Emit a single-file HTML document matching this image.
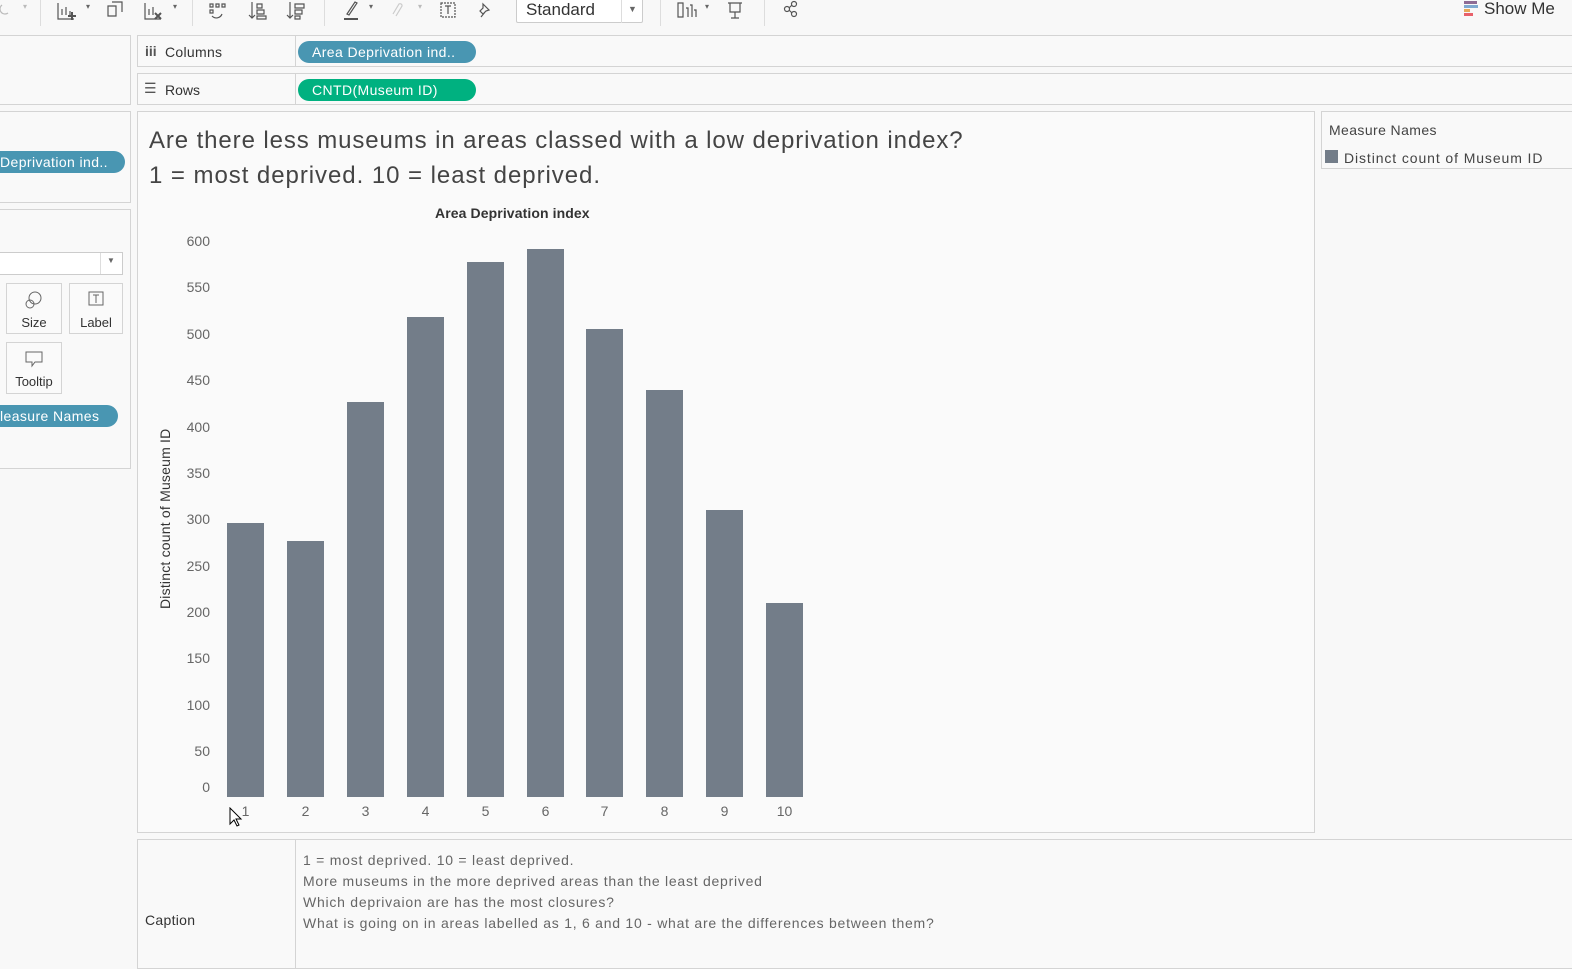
<!DOCTYPE html>
<html><head><meta charset="utf-8"><style>
*{margin:0;padding:0;box-sizing:border-box}
body{width:1572px;height:959px;background:#f8f8f8;font-family:"Liberation Sans",sans-serif;position:relative;overflow:hidden;color:#333}
.a{position:absolute}
.box{position:absolute;border:1px solid #d4d4d4;background:#f9f9f9}
.pill{position:absolute;border-radius:11px;color:#fff;font-size:14px;line-height:22px;padding-left:14px;white-space:nowrap;overflow:hidden;letter-spacing:0.4px}
.t{position:absolute;white-space:nowrap}
.bar{position:absolute;background:#737d89;width:37px}
.yl{position:absolute;left:170px;width:40px;text-align:right;font-size:14px;color:#666}
.xl{position:absolute;top:803px;width:37px;text-align:center;font-size:14px;color:#666}
.ic{position:absolute;color:#666;font-size:14px}
.card{position:absolute;border:1px solid #d4d4d4;background:#fafafa;text-align:center;font-size:13px;color:#333}
</style></head><body>
<div class="a" style="left:0;top:0;width:1572px;height:33px;background:#f8f8f8"></div>
<div class="a" style="left:40px;top:0;width:1px;height:26px;background:#ddd"></div>
<div class="a" style="left:192px;top:0;width:1px;height:26px;background:#ddd"></div>
<div class="a" style="left:324px;top:0;width:1px;height:26px;background:#ddd"></div>
<div class="a" style="left:660px;top:0;width:1px;height:26px;background:#ddd"></div>
<div class="a" style="left:764px;top:0;width:1px;height:26px;background:#ddd"></div>
<svg class="a" style="left:0;top:0" width="800" height="26" fill="none" stroke="#555" stroke-width="1.2">
<path d="M2 5 a5 5 0 1 0 6 8" stroke="#bbb"/>
<path d="M58 3v16h16M62 15v-6M66 15v-8M70 15v-4"/><path d="M72 12v8M68 16h8" stroke-width="2"/>
<path d="M108 6h8v10h-8zM112 2h10v10"/>
<path d="M145 3v16h16M149 15v-6M153 15v-8"/><path d="M155 13l6 6M161 13l-6 6" stroke-width="2"/>
<path d="M210 4h3v3h-3zM216 4h3v3h-3zM222 4h3v3h-3zM210 10h3v3h-3zM212 16a6 6 0 0 0 10-2"/>
<path d="M252 2v16M249 15l3 3 3-3M257 4h5v4h-5zM257 10h7v4h-7zM257 16h9v3h-9z"/>
<path d="M290 2v16M287 15l3 3 3-3M295 4h9v4h-9zM295 10h7v4h-7zM295 16h5v3h-5z"/>
<path d="M347 14l8-12 2 1-8 12z"/><path d="M344 19h14" stroke-width="2"/>
<path d="M393 14l6-10a2 2 0 0 1 3 2l-6 10" stroke="#ccc"/>
<path d="M441 3h14v14h-14z" stroke-dasharray="2 1"/><path d="M445 6h6M448 6v8"/>
<path d="M481 17l4-5M483 4l6 6-3 1-3 3-3-3 3-3z"/>
<path d="M678 3h5v14h-5zM686 8h2v9M690 5h2v12M694 10h2v7"/>
<path d="M728 3h14M730 3v9h10V3M735 12v6M731 18h8"/>
<circle cx="794" cy="4" r="2.5"/><circle cx="787" cy="9" r="2.5"/><circle cx="794" cy="14" r="2.5"/><path d="M789 8l3-3M789 10l3 3"/>
</svg>
<div class="ic" style="left:86px;top:2px;font-size:8px">▾</div>
<div class="ic" style="left:173px;top:2px;font-size:8px">▾</div>
<div class="ic" style="left:369px;top:2px;font-size:8px">▾</div>
<div class="ic" style="left:418px;top:2px;font-size:8px;color:#bbb">▾</div>
<div class="ic" style="left:705px;top:2px;font-size:8px">▾</div>
<div class="ic" style="left:23px;top:2px;font-size:8px;color:#bbb">▾</div>
<div class="a" style="left:516px;top:-2px;width:127px;height:25px;border:1px solid #ccc;background:#fff;border-radius:2px"></div>
<div class="a" style="left:621px;top:-2px;width:1px;height:25px;background:#ddd"></div>
<div class="t" style="left:526px;top:0;font-size:17px;color:#333">Standard</div>
<div class="ic" style="left:628px;top:4px;font-size:9px">▼</div>
<div class="a" style="left:1464px;top:1px;width:13px;height:3px;background:#8e6b94"></div>
<div class="a" style="left:1464px;top:5px;width:14px;height:3px;background:#7fa9d0"></div>
<div class="a" style="left:1464px;top:9px;width:6px;height:3px;background:#e7a857"></div>
<div class="a" style="left:1464px;top:13px;width:9px;height:3px;background:#e8606a"></div>
<div class="t" style="left:1484px;top:-1px;font-size:17px;color:#333">Show Me</div>
<div class="box" style="left:-2px;top:35px;width:133px;height:70px"></div>
<div class="box" style="left:-2px;top:111px;width:133px;height:92px"></div>
<div class="pill" style="left:-14px;top:151px;width:139px;background:#4996b2">Deprivation ind..</div>
<div class="box" style="left:-2px;top:209px;width:133px;height:260px"></div>
<div class="a" style="left:-2px;top:252px;width:125px;height:23px;border:1px solid #ccc;background:#fff"></div>
<div class="a" style="left:100px;top:253px;width:1px;height:21px;background:#ddd"></div>
<div class="ic" style="left:107px;top:256px;font-size:8px">▼</div>
<div class="card" style="left:6px;top:283px;width:56px;height:51px"><svg width="22" height="22" style="margin-top:5px" fill="none" stroke="#666"><circle cx="12" cy="9" r="6"/><circle cx="7" cy="15" r="4"/></svg><div style="margin-top:1px">Size</div></div>
<div class="card" style="left:69px;top:283px;width:54px;height:51px"><svg width="22" height="22" style="margin-top:5px" fill="none" stroke="#666"><rect x="4" y="3" width="14" height="13"/><path d="M8 6h6M11 6v8"/></svg><div style="margin-top:1px">Label</div></div>
<div class="card" style="left:6px;top:342px;width:56px;height:52px"><svg width="22" height="22" style="margin-top:5px" fill="none" stroke="#666"><path d="M3 4h16v10h-7l-3 4v-4h-6z"/></svg><div style="margin-top:1px">Tooltip</div></div>
<div class="pill" style="left:-14px;top:405px;width:132px;background:#4996b2">leasure Names</div>
<div class="box" style="left:137px;top:35px;width:1440px;height:32px;background:#f9f9f9"></div>
<div class="a" style="left:295px;top:35px;width:1px;height:32px;background:#d4d4d4"></div>
<div class="t" style="left:145px;top:43px;font-size:14px;color:#555;font-weight:bold">iii</div>
<div class="t" style="left:165px;top:44px;font-size:14px;color:#333;letter-spacing:0.3px">Columns</div>
<div class="pill" style="left:298px;top:41px;width:178px;background:#4996b2">Area Deprivation ind..</div>
<div class="box" style="left:137px;top:73px;width:1440px;height:32px"></div>
<div class="a" style="left:295px;top:73px;width:1px;height:32px;background:#d4d4d4"></div>
<div class="t" style="left:144px;top:80px;font-size:14px;color:#555">☰</div>
<div class="t" style="left:165px;top:82px;font-size:14px;color:#333">Rows</div>
<div class="pill" style="left:298px;top:79px;width:178px;background:#00b180">CNTD(Museum ID)</div>
<div class="box" style="left:137px;top:111px;width:1178px;height:722px;background:#fafafa"></div>
<div class="t" style="left:149px;top:127px;font-size:24px;color:#444;letter-spacing:0.9px">Are there less museums in areas classed with a low deprivation index?</div>
<div class="t" style="left:149px;top:162px;font-size:24px;color:#444;letter-spacing:0.95px">1 = most deprived. 10 = least deprived.</div>
<div class="t" style="left:435px;top:205px;font-size:14px;color:#333;font-weight:bold;letter-spacing:0.1px">Area Deprivation index</div>
<div class="t" style="left:157px;top:609px;font-size:14px;color:#333;transform:rotate(-90deg);transform-origin:0 0;letter-spacing:0.2px">Distinct count of Museum ID</div>
<div class="yl" style="top:233px">600</div>
<div class="yl" style="top:279px">550</div>
<div class="yl" style="top:326px">500</div>
<div class="yl" style="top:372px">450</div>
<div class="yl" style="top:419px">400</div>
<div class="yl" style="top:465px">350</div>
<div class="yl" style="top:511px">300</div>
<div class="yl" style="top:558px">250</div>
<div class="yl" style="top:604px">200</div>
<div class="yl" style="top:650px">150</div>
<div class="yl" style="top:697px">100</div>
<div class="yl" style="top:743px">50</div>
<div class="yl" style="top:779px">0</div>
<div class="bar" style="left:227px;top:523px;height:274px"></div>
<div class="bar" style="left:287px;top:541px;height:256px"></div>
<div class="bar" style="left:347px;top:402px;height:395px"></div>
<div class="bar" style="left:407px;top:317px;height:480px"></div>
<div class="bar" style="left:467px;top:262px;height:535px"></div>
<div class="bar" style="left:527px;top:249px;height:548px"></div>
<div class="bar" style="left:586px;top:329px;height:468px"></div>
<div class="bar" style="left:646px;top:390px;height:407px"></div>
<div class="bar" style="left:706px;top:510px;height:287px"></div>
<div class="bar" style="left:766px;top:603px;height:194px"></div>
<div class="xl" style="left:227px">1</div><div class="xl" style="left:287px">2</div><div class="xl" style="left:347px">3</div><div class="xl" style="left:407px">4</div><div class="xl" style="left:467px">5</div><div class="xl" style="left:527px">6</div><div class="xl" style="left:586px">7</div><div class="xl" style="left:646px">8</div><div class="xl" style="left:706px">9</div><div class="xl" style="left:766px">10</div>
<svg class="a" style="left:229px;top:807px" width="14" height="22"><path d="M1 1v16l4-4 3 6 2-1-3-6h5z" fill="#fff" stroke="#000" stroke-width="1"/></svg>
<div class="box" style="left:1321px;top:111px;width:260px;height:58px"></div>
<div class="t" style="left:1329px;top:122px;font-size:14px;color:#444;letter-spacing:0.4px">Measure Names</div>
<div class="a" style="left:1325px;top:150px;width:13px;height:13px;background:#737d89"></div>
<div class="t" style="left:1344px;top:150px;font-size:14px;color:#444;letter-spacing:0.9px">Distinct count of Museum ID</div>
<div class="box" style="left:137px;top:839px;width:1440px;height:130px"></div>
<div class="a" style="left:295px;top:839px;width:1px;height:130px;background:#d4d4d4"></div>
<div class="t" style="left:145px;top:912px;font-size:14px;color:#333;letter-spacing:0.3px">Caption</div>
<div class="t" style="left:303px;top:850px;font-size:14px;color:#666;line-height:21px;letter-spacing:0.75px">1 = most deprived. 10 = least deprived.<br>More museums in the more deprived areas than the least deprived<br>Which deprivaion are has the most closures?<br>What is going on in areas labelled as 1, 6 and 10 - what are the differences between them?</div>
</body></html>
